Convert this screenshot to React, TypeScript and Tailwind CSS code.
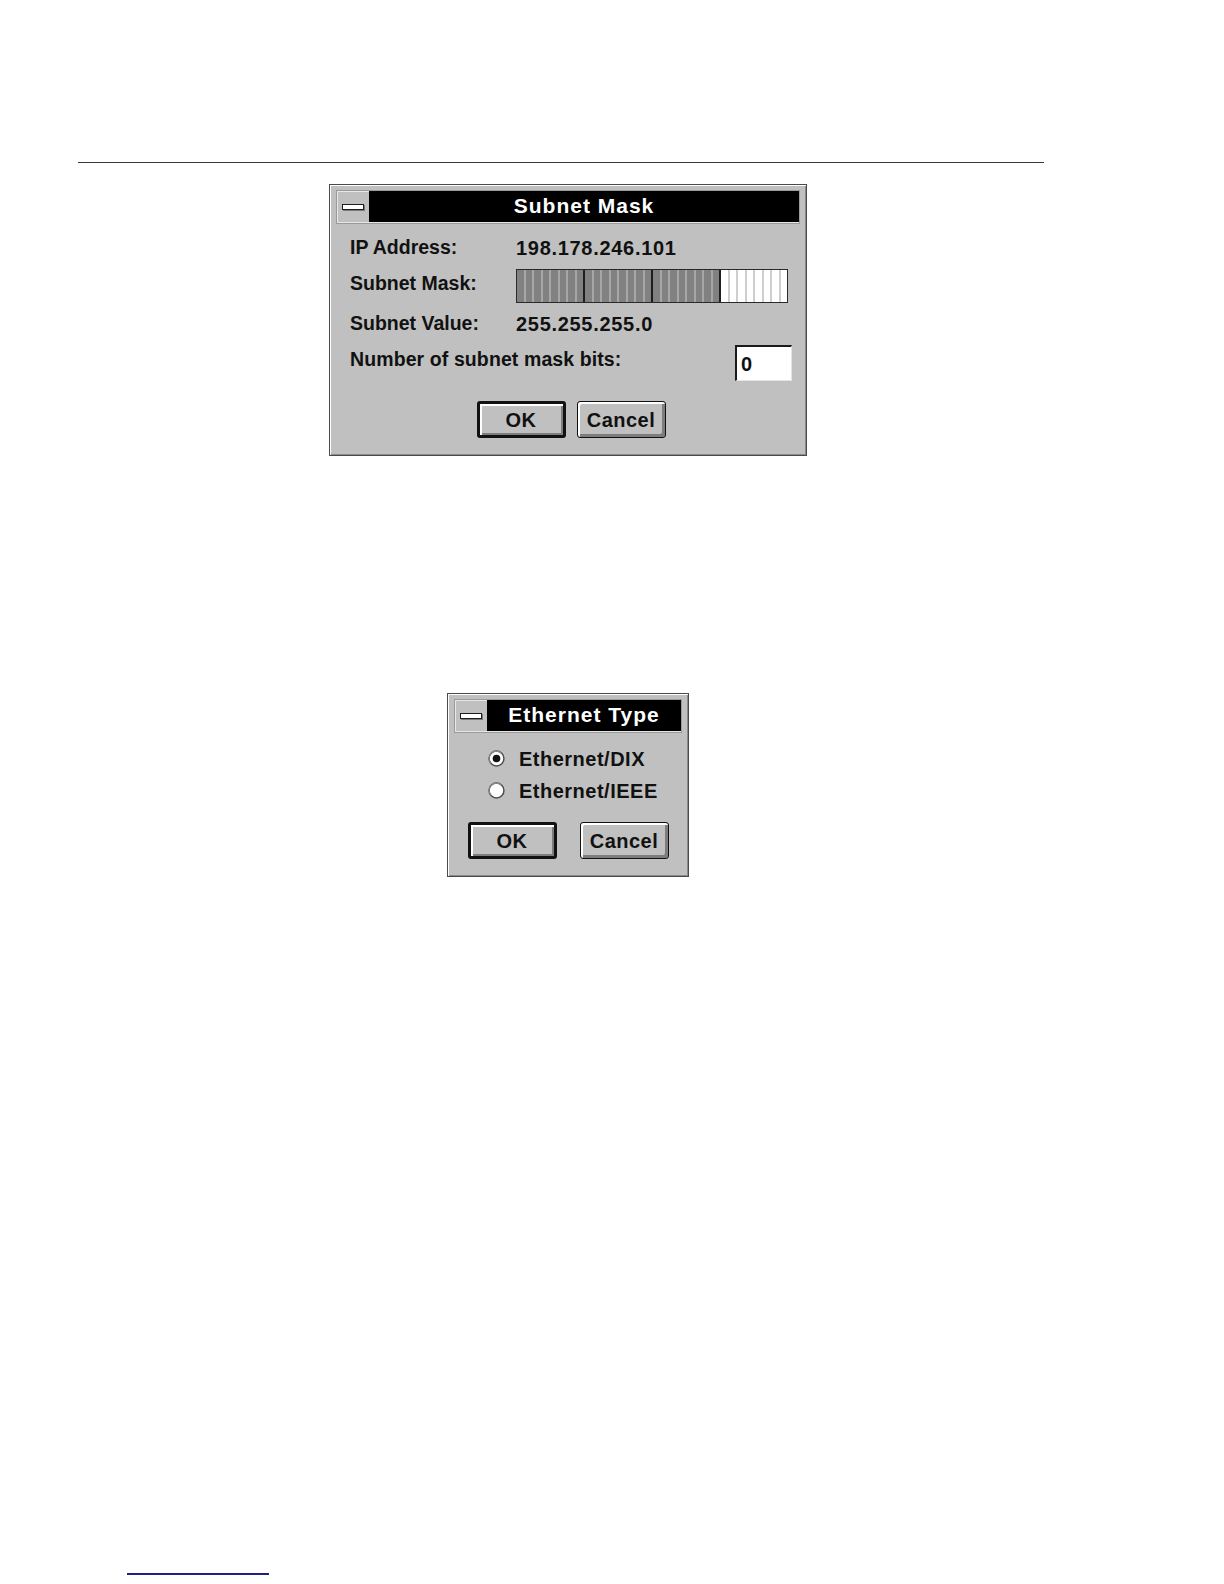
import type { ReactNode } from 'react'

function TitleBar({ title }: { title: string }) {
  return (
    <div className="flex h-[32px] border-b border-[#e6e6e6]">
      <div className="flex w-[32px] items-center justify-center bg-[#c0c0c0] shadow-[inset_1px_1px_0_#e8e8e8]">
        <div className="h-[6px] w-[22px] border border-[#1c1c1c] bg-white shadow-[1px_1px_0_#7a7a7a]" />
      </div>
      <div className="flex flex-1 items-center justify-center bg-black pb-[1px] text-[21px] font-bold tracking-[1px] text-white">
        {title}
      </div>
    </div>
  )
}

function Dialog({ title, width, children }: { title: string; width: string; children: ReactNode }) {
  return (
    <div
      className={`${width} border border-[#4a4a4a] bg-[#c0c0c0] pt-[6px] pr-[7px] pb-[6px] pl-[7px] shadow-[inset_1px_1px_0_#ffffff,inset_-1px_-1px_0_#8a8a8a]`}
    >
      <div className="shadow-[0_0_0_1px_#9a9a9a]">
        <TitleBar title={title} />
      </div>
      {children}
    </div>
  )
}

function Button({ label, isDefault = false }: { label: string; isDefault?: boolean }) {
  return (
    <div
      className={`flex h-[37px] w-[89px] items-center justify-center rounded-[3px] bg-[#c0c0c0] text-[20px] font-bold tracking-[0.5px] text-[#111] ${
        isDefault
          ? 'border-[3px] border-[#111] shadow-[inset_2px_2px_0_#ffffff,inset_-2px_-2px_0_#7d7d7d]'
          : 'border border-[#111] shadow-[inset_2px_2px_0_#ffffff,inset_-3px_-3px_0_#7d7d7d]'
      }`}
    >
      {label}
    </div>
  )
}

function MaskBar() {
  const segments = [true, true, true, false]
  return (
    <div className="flex h-[34px] w-[272px] border border-[#2a2a2a]">
      {segments.map((on, s) => (
        <div
          key={s}
          className={`flex flex-1 ${on ? 'bg-[#818181]' : 'bg-white'} ${s < 3 ? 'border-r-2 border-[#1e1e1e]' : ''}`}
        >
          {Array.from({ length: 8 }).map((_, b) => (
            <div
              key={b}
              className={`flex-1 ${b < 7 ? (on ? 'border-r-2 border-[#a6a6a6]' : 'border-r-2 border-[#cfcfcf]') : ''}`}
            />
          ))}
        </div>
      ))}
    </div>
  )
}

function Radio({ checked, label }: { checked: boolean; label: string }) {
  return (
    <div className="flex h-[23px] items-center">
      <svg width="17" height="17" viewBox="0 0 16 16" className="shrink-0">
        <circle cx="8" cy="8" r="7" fill="#ffffff" stroke="#4d4d4d" strokeWidth="1.4" />
        <path d="M3 12.5 A6.3 6.3 0 0 1 12.5 3" fill="none" stroke="#8a8a8a" strokeWidth="1" />
        {checked && <circle cx="8" cy="8" r="3.6" fill="#111" />}
      </svg>
      <span className="ml-[14px] text-[20px] font-bold tracking-[0.5px] text-[#111]">{label}</span>
    </div>
  )
}

export default function App() {
  return (
    <div className="min-h-[1584px] w-[1224px] bg-white pt-[162px] font-['Liberation_Sans',Arial,sans-serif] text-[#111]">
      <div className="ml-[78px] h-px w-[966px] bg-[#3a3a3a]" />

      <div className="ml-[329px] mt-[21px]">
        <Dialog title="Subnet Mask" width="w-[478px]">
          <div className="pl-[13px] pr-[7px] pb-[11px]">
            <div className="mt-[13px] flex h-[23px] items-center">
              <span className="w-[166px] text-[19.5px] font-bold">IP Address:</span>
              <span className="text-[20px] font-bold tracking-[0.7px]">198.178.246.101</span>
            </div>
            <div className="mt-[10px] flex items-start">
              <span className="mt-[3px] w-[166px] text-[19.5px] font-bold leading-[23px]">Subnet Mask:</span>
              <MaskBar />
            </div>
            <div className="mt-[9px] flex h-[23px] items-center">
              <span className="w-[166px] text-[19.5px] font-bold">Subnet Value:</span>
              <span className="text-[20px] font-bold tracking-[0.7px]">255.255.255.0</span>
            </div>
            <div className="mt-[10px] flex items-start justify-between">
              <span className="mt-[3px] text-[19.5px] font-bold leading-[23px] tracking-[0.1px]">Number of subnet mask bits:</span>
              <div className="flex h-[36px] w-[57px] items-center border-t-2 border-l-2 border-r border-b border-t-[#1a1a1a] border-l-[#1a1a1a] border-r-[#e4e4e4] border-b-[#e4e4e4] bg-white pl-[4px] text-[20px] font-bold">
                0
              </div>
            </div>
            <div className="mt-[20px] flex justify-center gap-[11px]">
              <Button label="OK" isDefault />
              <Button label="Cancel" />
            </div>
          </div>
        </Dialog>
      </div>

      <div className="ml-[447px] mt-[237px]">
        <Dialog title="Ethernet Type" width="w-[242px]">
          <div className="pb-[11px]">
            <div className="mt-[15px] flex flex-col gap-[9px] pl-[33px]">
              <Radio checked label="Ethernet/DIX" />
              <Radio checked={false} label="Ethernet/IEEE" />
            </div>
            <div className="mt-[20px] flex justify-center gap-[23px]">
              <Button label="OK" isDefault />
              <Button label="Cancel" />
            </div>
          </div>
        </Dialog>
      </div>

      <div className="ml-[127px] mt-[696px] h-[2px] w-[142px] bg-[#1f1f86]" />
    </div>
  )
}
